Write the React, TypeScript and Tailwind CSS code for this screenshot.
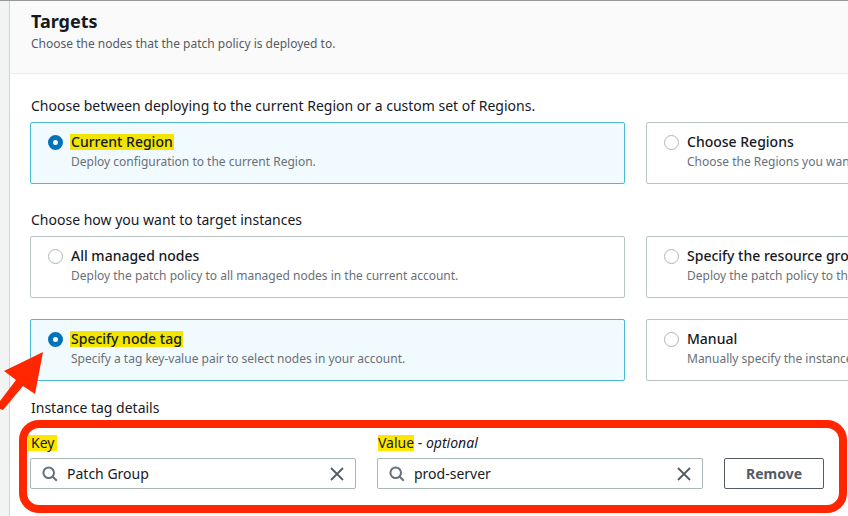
import React, { useState } from "react";

type ChoiceProps = {
  name: string;
  title: string;
  description: string;
  checked: boolean;
  highlight?: string;
  onSelect: () => void;
};

function Choice({ name, title, description, checked, highlight = "", onSelect }: ChoiceProps) {
  return (
    <label
      className={`flex h-[62px] gap-2 rounded-xs border px-[17px] pt-[9px] ${
        checked ? "border-[#4bbbd3] bg-[#f1faff]" : "border-[#b9c4c4] bg-white"
      }`}
    >
      <input
        type="radio"
        name={name}
        checked={checked}
        onChange={onSelect}
        className="mt-[3px] size-[15px] shrink-0 appearance-none rounded-full border border-[#aab7b8] bg-white checked:border-[5px] checked:border-[#0073bb]"
      />
      <span className="whitespace-nowrap">
        <span className="block text-[14px] leading-5 font-medium text-[#16191f]">
          <span className={highlight}>{title}</span>
        </span>
        <span className="mt-px block text-[12px] leading-[18px] text-[#687078]">{description}</span>
      </span>
    </label>
  );
}

function SearchField({ id, value, onChange }: { id: string; value: string; onChange: (v: string) => void }) {
  return (
    <div className="mt-[5px] flex h-[31px] items-center rounded-xs border border-[#aab7b8] bg-white pr-[10px] pl-[11px]">
      <svg viewBox="0 0 16 16" className="size-4 shrink-0" fill="none" stroke="#687078" strokeWidth="2" aria-hidden="true">
        <circle cx="6.7" cy="6.7" r="5.3" />
        <path d="M10.5 10.5l4.3 4.3" />
      </svg>
      <input
        id={id}
        value={value}
        onChange={(e) => onChange(e.target.value)}
        className="ml-[9px] min-w-0 flex-1 bg-transparent text-[14px] leading-5 text-[#16191f] outline-none"
      />
      <button type="button" aria-label="Clear" onClick={() => onChange("")}>
        <svg viewBox="0 0 16 16" className="size-4" fill="none" stroke="#545b64" strokeWidth="1.8" aria-hidden="true">
          <path d="M2 2l12 12M14 2L2 14" />
        </svg>
      </button>
    </div>
  );
}

export default function App() {
  const [region, setRegion] = useState("current");
  const [target, setTarget] = useState("tag");
  const [tagKey, setTagKey] = useState("Patch Group");
  const [tagValue, setTagValue] = useState("prod-server");
  const marker = "-mx-px inline-block bg-[#f2e600] px-px leading-4";

  return (
    <main className="h-screen overflow-hidden border-t border-[#979797] bg-[#f2f3f3] pl-[9px] font-['Noto_Sans',sans-serif] text-[#16191f]">
      <section className="min-h-full min-w-[1252px] border-l border-[#d0d3d3] bg-white">
        <header className="border-b border-[#eaeded] bg-[#fafafa] px-5 pt-2 pb-[19px]">
          <h2 className="pl-px text-[18px] leading-6 font-bold">Targets</h2>
          <p className="pl-px text-[12px] leading-[21px] text-[#545b64]">Choose the nodes that the patch policy is deployed to.</p>
        </header>

        <div className="px-5 pt-[22px]">
          <fieldset>
            <legend className="pl-px text-[14px] leading-5">
              Choose between deploying to the current Region or a custom set of Regions.
            </legend>
            <div className="mt-[6px] grid grid-cols-2 gap-x-[21px]">
              <Choice name="region" title="Current Region" description="Deploy configuration to the current Region." checked={region === "current"} highlight={marker} onSelect={() => setRegion("current")} />
              <Choice name="region" title="Choose Regions" description="Choose the Regions you want to deploy to." checked={region === "choose"} onSelect={() => setRegion("choose")} />
            </div>
          </fieldset>

          <fieldset className="mt-[26px]">
            <legend className="pl-px text-[14px] leading-5">Choose how you want to target instances</legend>
            <div className="mt-[6px] grid grid-cols-2 gap-[21px]">
              <Choice name="target" title="All managed nodes" description="Deploy the patch policy to all managed nodes in the current account." checked={target === "all"} onSelect={() => setTarget("all")} />
              <Choice name="target" title="Specify the resource group" description="Deploy the patch policy to the nodes in a resource group." checked={target === "group"} onSelect={() => setTarget("group")} />
              <Choice name="target" title="Specify node tag" description="Specify a tag key-value pair to select nodes in your account." checked={target === "tag"} highlight={marker} onSelect={() => setTarget("tag")} />
              <Choice name="target" title="Manual" description="Manually specify the instances." checked={target === "manual"} onSelect={() => setTarget("manual")} />
            </div>
          </fieldset>

          <h3 className="mt-[17px] pl-px text-[14px] leading-5">Instance tag details</h3>
          <div className="relative mt-[15px] grid w-fit grid-cols-[326px_326px_100px] items-end gap-x-[21px]">
            <div>
              <label htmlFor="tag-key" className="block pl-px text-[14px] leading-5">
                <span className="-mx-[3px] inline-block bg-[#ffe600] px-[3px] leading-4">Key</span>
              </label>
              <SearchField id="tag-key" value={tagKey} onChange={setTagKey} />
            </div>
            <div>
              <label htmlFor="tag-value" className="block pl-px text-[14px] leading-5">
                <span className="inline-block bg-[#ffe600] leading-4">Value</span> - <i>optional</i>
              </label>
              <SearchField id="tag-value" value={tagValue} onChange={setTagValue} />
            </div>
            <button type="button" className="h-[31px] rounded-xs border border-[#545b64] text-[14px] font-bold text-[#545b64]">Remove</button>
            <div className="pointer-events-none absolute -top-[13px] -right-[23px] -bottom-6 -left-[11px] rounded-[20px] border-8 border-[#ff2600]" />
          </div>
        </div>
      </section>
      <svg viewBox="0 0 44 60" className="pointer-events-none absolute top-[351px] left-0 h-[60px] w-[44px]" fill="#ff2600" aria-hidden="true">
        <path d="M43 1L35 43 23 35 3 59 0 58 0 50 16 29 4 20Z" />
      </svg>
    </main>
  );
}
